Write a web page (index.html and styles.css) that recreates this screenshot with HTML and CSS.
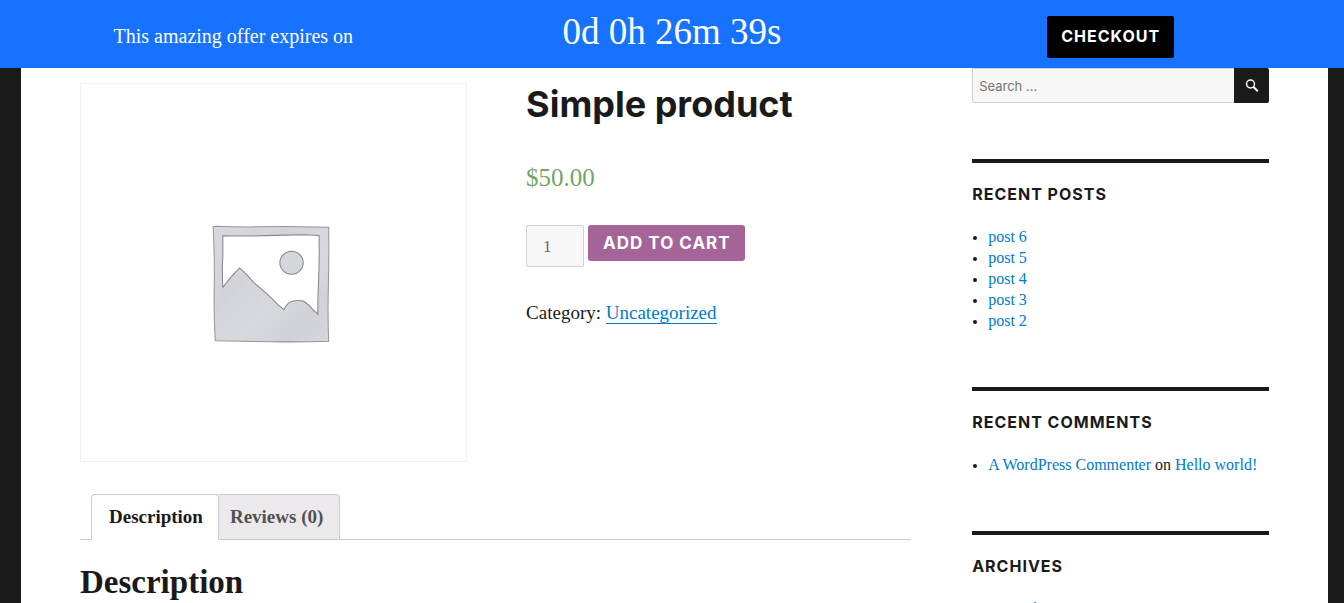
FILE: index.html
```html
<!DOCTYPE html>
<html lang="en">
<head>
<meta charset="utf-8">
<meta name="viewport" content="width=device-width, initial-scale=1">
<title>Simple product</title>
<link rel="stylesheet" href="styles.css">
</head>
<body>
<div class="offer">
  <p class="offer-text">This amazing offer expires on</p>
  <p class="offer-timer">0d 0h 26m 39s</p>
  <div class="offer-action"><button class="checkout" type="button">CHECKOUT</button></div>
</div>
<div class="site">
  <main class="content">
    <div class="product">
      <div class="gallery">
        <svg class="placeholder" viewBox="3 0 140 140" role="img" aria-label="Awaiting product image">
          <defs>
            <linearGradient id="wash" x1="0" y1="0" x2="1" y2="1">
              <stop offset="0" stop-color="#d8d9de"/><stop offset=".35" stop-color="#d3d4d9"/>
              <stop offset=".6" stop-color="#d8d9dd"/><stop offset=".8" stop-color="#d1d2d7"/><stop offset="1" stop-color="#d6d7dc"/>
            </linearGradient>
          </defs>
          <path d="M14 12.500 L17 12 Q40 13 62 12.500 T100 12.500 L127.500 13 Q128 40 127.200 70 T127.500 125 Q100 126 72 125.500 T16 124.500 Q14.500 100 15 72 T14 12.500Z" fill="url(#wash)" stroke="#949598"/>
          <path d="M23.500 21.500 Q50 22 75 21 L104 20.500 L118 21 Q118.500 45 117.500 67 T117 98.500 L112 94 Q107 88 102.500 85.500 Q93 84 87.500 88 Q84.500 91 83.500 94 L78 89.500 Q70 81 63 75 L54 67.500 L47 59.500 L40 53 Q34 59 29 65 L23.500 72 Q22.500 55 23.500 42Z" fill="#fff" stroke="#858689"/>
          <ellipse cx="91" cy="48" rx="11.500" ry="11.300" fill="#d5d6db" stroke="#858689"/>
        </svg>
      </div>
      <div class="summary">
        <h1 class="product-title">Simple product</h1>
        <p class="price">$50.00</p>
        <form class="cart">
          <input class="qty" type="text" inputmode="numeric" value="1" aria-label="Quantity">
          <button class="add" type="button">ADD TO CART</button>
        </form>
        <p class="meta">Category: <a class="meta-link" href="#">Uncategorized</a></p>
      </div>
    </div>
    <ul class="tabs">
      <li class="tab tab-active"><a class="tab-link" href="#description">Description</a></li>
      <li class="tab"><a class="tab-link" href="#reviews">Reviews (0)</a></li>
    </ul>
    <h2 class="panel-title" id="description">Description</h2>
  </main>
  <aside class="sidebar">
    <form class="search">
      <input class="search-field" type="search" placeholder="Search ..." aria-label="Search for">
      <button class="search-button" type="button" aria-label="Search">
        <svg class="search-icon" viewBox="0 0 14 14"><circle cx="5.500" cy="5" r="4" fill="none" stroke="#fff" stroke-width="1.400"/><path d="M8.300 7.800 L12.800 12.300" stroke="#fff" stroke-width="2"/></svg>
      </button>
    </form>
    <section class="widget">
      <h2 class="widget-title">RECENT POSTS</h2>
      <ul class="widget-list">
        <li><a href="#">post 6</a></li>
        <li><a href="#">post 5</a></li>
        <li><a href="#">post 4</a></li>
        <li><a href="#">post 3</a></li>
        <li><a href="#">post 2</a></li>
      </ul>
    </section>
    <section class="widget">
      <h2 class="widget-title">RECENT COMMENTS</h2>
      <ul class="widget-list">
        <li><a href="#">A WordPress Commenter</a> on <a href="#">Hello world!</a></li>
      </ul>
    </section>
    <section class="widget">
      <h2 class="widget-title">ARCHIVES</h2>
      <ul class="widget-list">
        <li><a href="#">December</a></li>
      </ul>
    </section>
  </aside>
</div>
</body>
</html>
```
FILE: styles.css
```css
* { box-sizing: border-box; }
body {
  margin: 0;
  height: 100vh;
  overflow: hidden;
  background: #1a1a1a;
  color: #1a1a1a;
  font-family: "Liberation Serif", serif;
  font-size: 19px;
  line-height: 28px;
}
h1, h2, p, ul { margin: 0; padding: 0; }
button, input { font: inherit; margin: 0; border: 0; }
a { color: #007acc; text-decoration: none; }

.offer {
  display: grid;
  grid-template-columns: repeat(3, 1fr);
  height: 68px;
  padding: 0 14px;
  background: #1672ff;
  color: #fff;
  text-align: center;
}
.offer-text { padding-top: 22px; font-size: 20px; }
.offer-timer { padding-top: 12px; font-size: 37px; line-height: 40px; }
.offer-action { padding-top: 16px; }
.checkout {
  display: block;
  height: 42px;
  margin: 0 auto;
  padding: 0 14px 2px;
  border-radius: 2px;
  background: #000;
  color: #fff;
  font: 700 16px/38px Inter, sans-serif;
  letter-spacing: 1px;
}

.site {
  display: grid;
  grid-template-columns: 14fr 5fr;
  column-gap: 61px;
  min-height: 100vh;
  margin: 0 16px 0 21px;
  padding: 0 59px;
  background: #fff;
}
.content { padding-top: 15px; }
.product {
  display: grid;
  grid-template-columns: 387fr 385fr;
  column-gap: 59px;
}
.gallery {
  display: flex;
  align-items: center;
  justify-content: center;
  aspect-ratio: 387 / 379;
  border: 1px solid #f1f1f2;
}
.placeholder { width: 37%; margin-top: 26px; }
.product-title { font: 700 36px/42px Inter, sans-serif; }
.price { margin-top: 37px; color: #77a464; font-size: 25px; line-height: 32px; }
.cart { display: flex; align-items: flex-start; gap: 4px; margin-top: 31px; }
.qty {
  width: 58px;
  height: 42px;
  border: 1px solid #d1d1d1;
  border-radius: 2px;
  background: #f7f7f7;
  color: #686868;
  font-size: 17px;
  padding: 2px 14px 0 16px;
}
.add {
  height: 36px;
  padding: 0 14px 0 15px;
  border-radius: 3px;
  background: #a46497;
  color: #fff;
  font: 700 17px/34px Inter, sans-serif;
  letter-spacing: 1px;
}
.meta { margin-top: 32px; }
.meta-link { border-bottom: 1px solid #007acc; }

.tabs {
  display: flex;
  margin-top: 32px;
  padding-left: 11px;
  border-bottom: 1px solid #cfc8d2;
  list-style: none;
}
.tab {
  margin-bottom: -1px;
  border: 1px solid #cfc8d2;
  border-left: 0;
  border-radius: 0 4px 0 0;
  background: #ebe9eb;
}
.tab-active {
  border-left: 1px solid #cfc8d2;
  border-bottom-color: #fff;
  border-radius: 4px 4px 0 0;
  background: #fff;
}
.tab-link { display: block; padding: 8px 16px 8px 11px; color: #515151; font-weight: 700; }
.tab-active .tab-link { padding-left: 17px; padding-right: 15px; color: #1a1a1a; }
.panel-title { margin-top: 24px; font-size: 33px; line-height: 36px; }

.search { display: flex; }
.search-field {
  flex: 1;
  min-width: 0;
  height: 35px;
  padding: 0 6px;
  border: 1px solid #d1d1d1;
  border-right: 0;
  border-radius: 2px 0 0 2px;
  background: #f7f7f7;
  font: 13px/20px Inter, sans-serif;
}
.search-field::placeholder { color: #757575; }
.search-button {
  display: flex;
  align-items: center;
  justify-content: center;
  width: 35px;
  height: 35px;
  padding: 0;
  border-radius: 0 2px 2px 0;
  background: #1a1a1a;
}
.search-icon { width: 14px; height: 14px; }
.widget { margin-top: 56px; padding-top: 21px; border-top: 4px solid #1a1a1a; }
.widget-title { font: 700 16px/20px Inter, sans-serif; letter-spacing: 1px; }
.widget-list { margin-top: 22px; padding-left: 16px; font-size: 16px; line-height: 21px; }
.widget-list li::marker { font-size: 14px; }
```
